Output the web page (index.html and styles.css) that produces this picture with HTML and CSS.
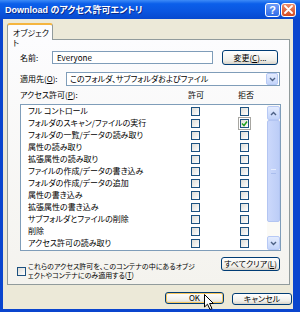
FILE: index.html
```html
<!DOCTYPE html>
<html lang="ja">
<head>
  <meta charset="UTF-8">
  <title>Download のアクセス許可エントリ</title>
  <link rel="stylesheet" href="styles.css">
</head>
<body>
  <div class="window">
    <div class="titlebar">
      <span class="title">Download のアクセス許可エントリ</span>
      <span class="tb-btn help">?</span>
      <span class="tb-btn close">
        <svg width="9" height="9" viewBox="0 0 9 9"><path d="M1 1 L8 8 M8 1 L1 8" stroke="#fff" stroke-width="1.8" stroke-linecap="round"/></svg>
      </span>
    </div>

    <div class="frame">
      <div class="tabs">
        <div class="tab">オブジェクト</div>
      </div>

      <div class="panel">
        <div class="name-row">
          <span class="label name-label">名前:</span>
          <div class="textbox">Everyone</div>
          <button class="button change-btn">変更(<u>C</u>)...</button>
        </div>

        <div class="apply-row">
          <span class="label apply-label">適用先(<u>O</u>):</span>
          <div class="select">
            <span class="select-text">このフォルダ、サブフォルダおよびファイル</span>
            <span class="arrow-btn">
              <svg width="7" height="5" viewBox="0 0 7 5"><path d="M1 1 L3.5 3.5 L6 1" fill="none" stroke="#4D6185" stroke-width="1.4"/></svg>
            </span>
          </div>
        </div>

        <div class="perm-head">
          <span class="perm-label">アクセス許可(<u>P</u>):</span>
          <span class="head-col allow">許可</span>
          <span class="head-col deny">拒否</span>
        </div>

        <div class="listbox">
          <div class="items">
            <div class="item"><span class="item-name">フル コントロール</span><span class="check allow"></span><span class="check deny"></span></div>
            <div class="item"><span class="item-name">フォルダのスキャン/ファイルの実行</span><span class="check allow"></span><span class="check deny checked"><svg width="7" height="7" viewBox="0 0 7 7"><path d="M1 3.5 L3 5.5 L6 1.5" fill="none" stroke="#21A121" stroke-width="1.5"/></svg></span></div>
            <div class="item"><span class="item-name">フォルダの一覧/データの読み取り</span><span class="check allow"></span><span class="check deny"></span></div>
            <div class="item"><span class="item-name">属性の読み取り</span><span class="check allow"></span><span class="check deny"></span></div>
            <div class="item"><span class="item-name">拡張属性の読み取り</span><span class="check allow"></span><span class="check deny"></span></div>
            <div class="item"><span class="item-name">ファイルの作成/データの書き込み</span><span class="check allow"></span><span class="check deny"></span></div>
            <div class="item"><span class="item-name">フォルダの作成/データの追加</span><span class="check allow"></span><span class="check deny"></span></div>
            <div class="item"><span class="item-name">属性の書き込み</span><span class="check allow"></span><span class="check deny"></span></div>
            <div class="item"><span class="item-name">拡張属性の書き込み</span><span class="check allow"></span><span class="check deny"></span></div>
            <div class="item"><span class="item-name">サブフォルダとファイルの削除</span><span class="check allow"></span><span class="check deny"></span></div>
            <div class="item"><span class="item-name">削除</span><span class="check allow"></span><span class="check deny"></span></div>
            <div class="item"><span class="item-name">アクセス許可の読み取り</span><span class="check allow"></span><span class="check deny"></span></div>
          </div>
          <div class="scrollbar">
            <span class="sb-btn">
              <svg width="7" height="5" viewBox="0 0 7 5"><path d="M1 4 L3.5 1.5 L6 4" fill="none" stroke="#4D6185" stroke-width="1.4"/></svg>
            </span>
            <span class="thumb"><span class="grip"></span></span>
            <span class="track"></span>
            <span class="sb-btn">
              <svg width="7" height="5" viewBox="0 0 7 5"><path d="M1 1 L3.5 3.5 L6 1" fill="none" stroke="#4D6185" stroke-width="1.4"/></svg>
            </span>
          </div>
        </div>

        <div class="bottom-row">
          <div class="inherit">
            <span class="check"></span>
            <span class="inherit-text">これらのアクセス許可を、このコンテナの中にあるオブジ<br>ェクトやコンテナにのみ適用する(<u>T</u>)</span>
          </div>
          <button class="button clear-btn">すべてクリア(<u>L</u>)</button>
        </div>
      </div>

      <div class="footer">
        <button class="button ok-btn">OK</button>
        <button class="button cancel-btn">キャンセル</button>
      </div>
    </div>

    <!-- mouse pointer over the OK button -->
    <svg class="pointer" width="12" height="17" viewBox="0 0 12 17">
      <path d="M0.5 0.5 L0.5 13 L3.5 10.2 L6 15.5 L8 14.6 L5.6 9.5 L9.5 9.5 Z" fill="#fff" stroke="#000" stroke-width="1"/>
    </svg>
  </div>
</body>
</html>
```

FILE: styles.css
```css
* {
  box-sizing: border-box;
}

body {
  margin: 0;
  font-family: "Noto Sans CJK JP", sans-serif;
  font-size: 8px;
  font-feature-settings: "palt";
  color: #000;
}

.window {
  position: relative;
  width: 300px;
  height: 312px;
  display: flex;
  flex-direction: column;
  overflow: hidden;
}

.titlebar {
  flex: none;
  height: 19px;
  display: flex;
  align-items: center;
  padding: 0 4px 0 5px;
  background: linear-gradient(#3D8BF7 0%, #0B5FEA 20%, #0A56E0 60%, #0749CF 100%);
}

.title {
  flex: 1;
  color: #fff;
  font-family: "Liberation Sans", "Noto Sans CJK JP", sans-serif;
  font-weight: bold;
  font-size: 9px;
  text-shadow: 1px 1px 0 #0A2A8A;
}

.tb-btn {
  width: 15px;
  height: 14px;
  border: 1px solid #fff;
  border-radius: 3px;
  display: flex;
  align-items: center;
  justify-content: center;
}

.help {
  background: linear-gradient(#6E9CF7, #2F6BE8);
  color: #fff;
  font-family: "Liberation Sans", sans-serif;
  font-weight: bold;
  font-size: 11px;
}

.close {
  margin-left: 1px;
  background: linear-gradient(#EC8D6C, #D24A22);
}

.frame {
  flex: 1;
  display: flex;
  flex-direction: column;
  background: #ECE9D8;
  border-style: solid;
  border-color: #0A45CE;
  border-width: 0 7px 3px 3px;
  padding: 4px 3px 0 4px;
}

.tabs {
  display: flex;
  margin-bottom: -1px;
  position: relative;
  z-index: 1;
}

.tab {
  width: 46px;
  height: 17px;
  border: 1px solid #919B9C;
  border-top: 2px solid #F5B53F;
  border-bottom: none;
  border-radius: 3px 3px 0 0;
  background: #FCFCFE;
  padding: 3px 0 0 5px;
  line-height: 10px;
}

.panel {
  height: 246px;
  border: 1px solid #919B9C;
  background: linear-gradient(#FCFCFE, #F4F3EE);
  padding: 10px 8px 0 12px;
  display: flex;
  flex-direction: column;
}

.label {
  flex: none;
  line-height: 10px;
}

.name-row {
  display: flex;
  align-items: center;
  height: 15px;
}

.name-label {
  width: 32px;
}

.textbox {
  width: 161px;
  height: 13px;
  border: 1px solid #7F9DB9;
  background: #fff;
  padding-left: 4px;
  line-height: 11px;
}

.button {
  font-family: inherit;
  font-size: 8px;
  font-feature-settings: "palt";
  color: #000;
  padding: 0;
  border: 1px solid #003C74;
  border-radius: 3px;
  background: linear-gradient(#FFFFFF, #F0EFEA 70%, #D8D3C8);
  line-height: 10px;
}

.change-btn {
  width: 56px;
  height: 15px;
  margin-left: auto;
  margin-right: 3px;
}

.apply-row {
  display: flex;
  align-items: center;
  height: 14px;
  margin-top: 7px;
}

.apply-label {
  width: 46px;
}

.select {
  flex: 1;
  height: 14px;
  margin-right: 1px;
  display: flex;
  align-items: center;
  border: 1px solid #7F9DB9;
  background: #fff;
}

.select-text {
  flex: 1;
  padding-left: 3px;
  line-height: 10px;
}

.arrow-btn,
.sb-btn {
  width: 12px;
  height: 12px;
  display: flex;
  align-items: center;
  justify-content: center;
  border: 1px solid #B7C9F5;
  border-radius: 2px;
  background: linear-gradient(#E4ECFE, #C3D4FA);
}

.arrow-btn {
  margin-right: 1px;
}

.perm-head {
  display: flex;
  height: 10px;
  margin-top: 4px;
  line-height: 10px;
}

.perm-label {
  flex: 1;
}

.head-col {
  width: 20px;
  text-align: center;
}

.head-col.allow {
  margin-right: 30px;
}

.head-col.deny {
  margin-right: 25px;
}

.listbox {
  height: 147px;
  margin-top: 4px;
  display: flex;
  border: 1px solid #7F9DB9;
  background: #fff;
}

.items {
  flex: 1;
  padding-left: 7px;
}

.item {
  height: 12px;
  display: flex;
  align-items: center;
  line-height: 10px;
}

.item-name {
  flex: 1;
}

.check {
  flex: none;
  width: 9px;
  height: 9px;
  border: 1px solid #1C5180;
  background: linear-gradient(135deg, #DCDCD7, #FFFFFF);
  display: flex;
  align-items: center;
  justify-content: center;
}

.check.allow {
  margin-right: 40px;
}

.check.deny {
  margin-right: 18px;
}

.check.checked {
  outline: 1px solid #A7A6A1;
  outline-offset: 1px;
}

.scrollbar {
  width: 13px;
  display: flex;
  flex-direction: column;
  padding-top: 1px;
  background: #FBFAF6;
}

.sb-btn {
  width: 13px;
  height: 14px;
}

.thumb {
  height: 102px;
  display: flex;
  align-items: center;
  justify-content: center;
  border: 1px solid #B3C5F2;
  border-radius: 2px;
  background: linear-gradient(to right, #CBD8FB, #BCCDF7);
}

.grip {
  width: 5px;
  height: 5px;
  border-top: 1px solid #E6EDFE;
  border-bottom: 1px solid #A9BDEE;
}

.track {
  flex: 1;
}

.bottom-row {
  display: flex;
  align-items: flex-start;
  margin-top: 6px;
}

.inherit {
  display: flex;
  align-items: center;
  gap: 2px;
  margin-top: 5px;
  margin-left: -3px;
}

.inherit-text {
  font-size: 7px;
  line-height: 9px;
  white-space: nowrap;
}

.clear-btn {
  width: 59px;
  height: 14px;
  margin-left: auto;
  margin-right: 1px;
}

.footer {
  display: flex;
  justify-content: flex-end;
  align-items: flex-start;
  gap: 8px;
  margin-top: 7px;
  margin-right: -2px;
}

.ok-btn {
  width: 59px;
  height: 12px;
  box-shadow: inset 0 0 0 1px #F7C65E;
}

.cancel-btn {
  width: 60px;
  height: 12px;
  margin-top: 1px;
}

.pointer {
  position: absolute;
  left: 204px;
  top: 294px;
}
```
